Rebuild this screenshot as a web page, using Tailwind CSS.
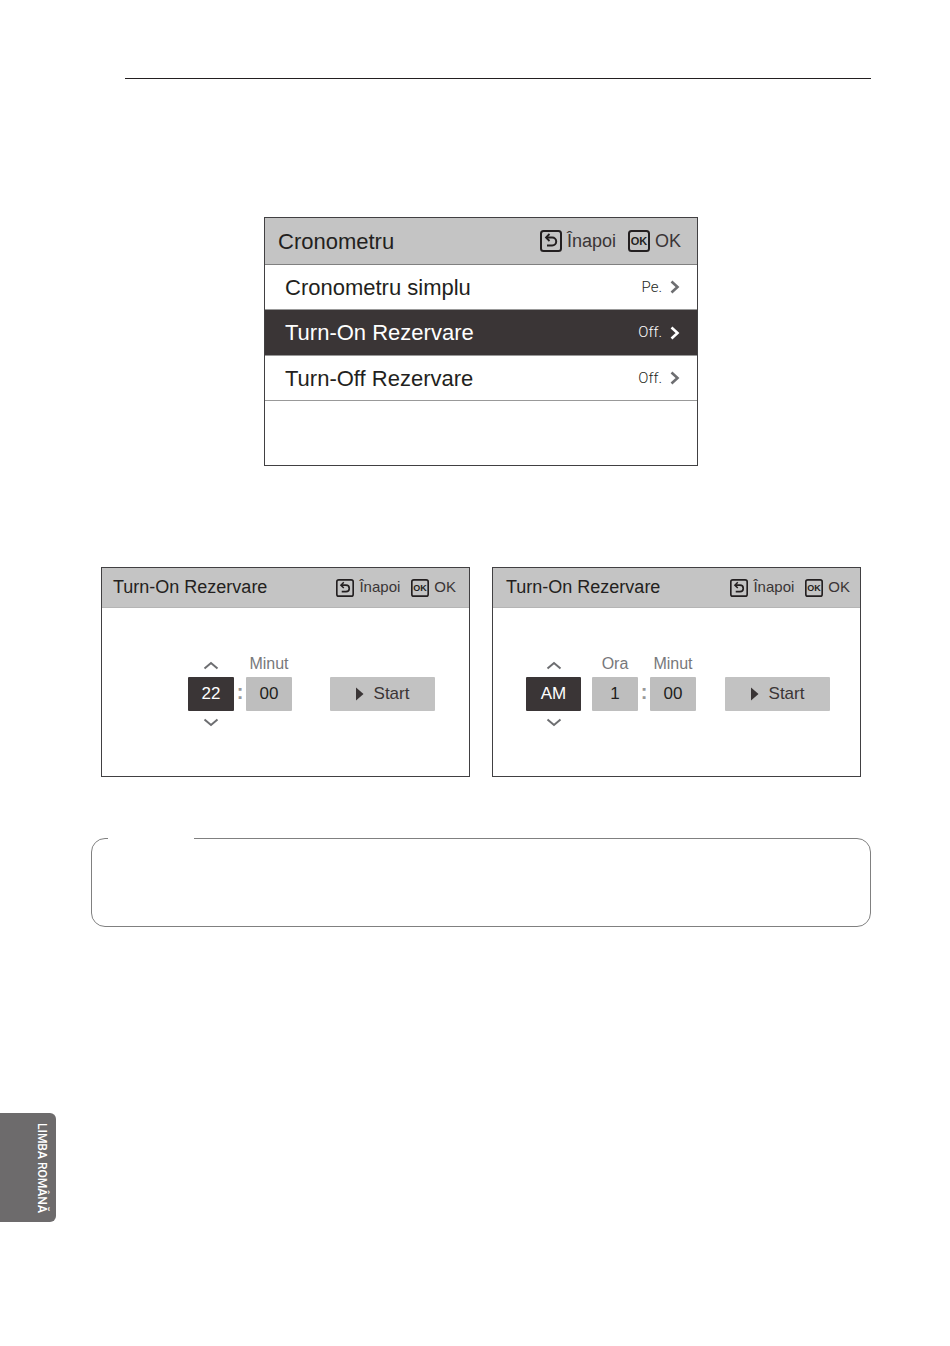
<!DOCTYPE html>
<html lang="ro">

<head>
	<meta charset="UTF-8">
	<meta name="viewport" content="width=device-width, initial-scale=1">
	<title>Cronometru</title>
	<script src="https://cdn.jsdelivr.net/npm/@tailwindcss/browser@4"></script>
</head>

<body class="bg-white font-['Liberation_Sans',Arial,sans-serif] text-[#231f20]">
	<!-- Shared icons -->
	<svg class="hidden">
		<symbol id="back" viewBox="0 0 22 22">
			<rect x="1" y="1" width="20" height="20" rx="2.5" fill="none" stroke="currentColor" stroke-width="2" />
			<path d="M6 7.5h6.200a4 4 0 0 1 0 8H7" fill="none" stroke="currentColor" stroke-width="2" />
			<path d="M9.500 4 6 7.500l3.500 3.500" fill="none" stroke="currentColor" stroke-width="1.800" />
		</symbol>
		<symbol id="ok" viewBox="0 0 22 22">
			<rect x="1" y="1" width="20" height="20" rx="2.5" fill="none" stroke="currentColor" stroke-width="2" />
			<text x="11" y="15" text-anchor="middle" font-size="11" font-weight="700" fill="currentColor">OK</text>
		</symbol>
		<symbol id="right" viewBox="0 0 10 14">
			<path d="M1.5 1.5 7.5 7l-6 5.5" fill="none" stroke="currentColor" stroke-width="2.6" />
		</symbol>
		<symbol id="up" viewBox="0 0 16 9">
			<path d="M1.5 7.5 8 2l6.5 5.5" fill="none" stroke="currentColor" stroke-width="2" />
		</symbol>
		<symbol id="down" viewBox="0 0 16 9">
			<path d="M1.5 1.5 8 7l6.5-5.5" fill="none" stroke="currentColor" stroke-width="2" />
		</symbol>
		<symbol id="play" viewBox="0 0 8 14">
			<path d="M0 .5 7.5 7 0 13.5z" fill="currentColor" />
		</symbol>
	</svg>

	<hr class="mt-[78px] ml-[125px] mr-[79px] border-t border-[#231f20]">

	<main class="pl-[91px] pr-[79px]">
		<!-- Timer menu -->
		<section class="mt-[138px] mx-auto w-[434px] h-[249px] border border-[#414042]">
			<header class="flex items-center h-[47px] pl-[13px] pr-4 bg-[#c4c4c4] border-b border-[#808080]">
				<h1 class="text-[22px]">Cronometru</h1>
				<button class="flex items-center gap-[5px] ml-auto text-[18px] text-[#3a3536]"><svg class="size-[22px] text-[#231f20]"><use href="#back" /></svg>Înapoi</button>
				<button class="flex items-center gap-[5px] ml-3 text-[18px] text-[#3a3536]"><svg aria-hidden="true" class="size-[22px] text-[#231f20]"><use href="#ok" /></svg>OK</button>
			</header>
			<a href="#" class="flex items-center h-[45px] pl-5 pr-[17px] border-b border-[#999999] text-[22px]">Cronometru simplu<span class="ml-auto mr-2 font-[Roboto] font-light text-[15px]">Pe.</span><svg class="w-[10px] h-[14px] text-[#6d6e71]"><use href="#right" /></svg></a>
			<a href="#" class="flex items-center h-[46px] pl-5 pr-[17px] border-b border-[#999999] bg-[#3a3536] text-white text-[22px]">Turn-On Rezervare<span class="ml-auto mr-2 font-[Roboto] font-light text-[15px]">Off.</span><svg class="w-[10px] h-[14px]"><use href="#right" /></svg></a>
			<a href="#" class="flex items-center h-[45px] pl-5 pr-[17px] border-b border-[#999999] text-[22px]">Turn-Off Rezervare<span class="ml-auto mr-2 font-[Roboto] font-light text-[15px]">Off.</span><svg class="w-[10px] h-[14px] text-[#6d6e71]"><use href="#right" /></svg></a>
		</section>

		<div class="flex gap-[22px] mt-[101px] px-[10px]">
			<!-- 24 hour format -->
			<section class="flex-1 h-[210px] border border-[#414042]">
				<header class="flex items-center h-10 pl-[11px] pr-[13px] bg-[#c4c4c4] border-b border-[#b5b5b5]">
					<h2 class="text-[18px]">Turn-On Rezervare</h2>
					<button class="flex items-center gap-[5px] ml-auto text-[15px] text-[#3a3536]"><svg class="size-[18px] text-[#231f20]"><use href="#back" /></svg>Înapoi</button>
					<button class="flex items-center gap-[5px] ml-[11px] text-[15px] text-[#3a3536]"><svg aria-hidden="true" class="size-[18px] text-[#231f20]"><use href="#ok" /></svg>OK</button>
				</header>
				<div class="flex pt-[45px] pl-[86px] pr-[34px] text-[17px]">
					<div class="flex flex-col items-center w-[46px]">
						<button aria-label="Sus" class="flex items-end h-6 pb-[7px] text-[#6d6e71]"><svg class="w-4 h-[9px]"><use href="#up" /></svg></button>
						<input aria-label="Ora" class="w-full h-[34px] rounded-[1px] bg-[#3a3536] text-white text-center" type="text" value="22">
						<button aria-label="Jos" class="pt-[7px] text-[#6d6e71]"><svg class="w-4 h-[9px]"><use href="#down" /></svg></button>
					</div>
					<span class="w-3 h-[34px] mt-6 text-center text-[20px] leading-[30px] font-bold text-[#999999]">:</span>
					<div class="flex flex-col items-center w-[46px]">
						<label for="minutes24" class="h-6 text-[16px] leading-[22px] text-[#77787b]">Minut</label>
						<input id="minutes24" class="w-full h-[34px] rounded-[1px] bg-[#bebebe] text-center" type="text" value="00">
					</div>
					<button class="flex items-center justify-center gap-[10px] w-[105px] h-[34px] mt-6 ml-auto rounded-[1px] bg-[#c2c2c2] text-[#3a3536]"><svg class="w-2 h-[14px]"><use href="#play" /></svg>Start</button>
				</div>
			</section>

			<!-- AM / PM format -->
			<section class="flex-1 h-[210px] border border-[#414042]">
				<header class="flex items-center h-10 pl-[13px] pr-[10px] bg-[#c4c4c4] border-b border-[#b5b5b5]">
					<h2 class="text-[18px]">Turn-On Rezervare</h2>
					<button class="flex items-center gap-[5px] ml-auto text-[15px] text-[#3a3536]"><svg class="size-[18px] text-[#231f20]"><use href="#back" /></svg>Înapoi</button>
					<button class="flex items-center gap-[5px] ml-[11px] text-[15px] text-[#3a3536]"><svg aria-hidden="true" class="size-[18px] text-[#231f20]"><use href="#ok" /></svg>OK</button>
				</header>
				<div class="flex pt-[45px] pl-[33px] pr-[30px] text-[17px]">
					<div class="flex flex-col items-center w-[55px] mr-[11px]">
						<button aria-label="Sus" class="flex items-end h-6 pb-[7px] text-[#6d6e71]"><svg class="w-4 h-[9px]"><use href="#up" /></svg></button>
						<input aria-label="AM / PM" class="w-full h-[34px] rounded-[1px] bg-[#3a3536] text-white text-center" type="text" value="AM">
						<button aria-label="Jos" class="pt-[7px] text-[#6d6e71]"><svg class="w-4 h-[9px]"><use href="#down" /></svg></button>
					</div>
					<div class="flex flex-col items-center w-[46px]">
						<label for="hour12" class="h-6 text-[16px] leading-[22px] text-[#77787b]">Ora</label>
						<input id="hour12" class="w-full h-[34px] rounded-[1px] bg-[#bebebe] text-center" type="text" value="1">
					</div>
					<span class="w-3 h-[34px] mt-6 text-center text-[20px] leading-[30px] font-bold text-[#999999]">:</span>
					<div class="flex flex-col items-center w-[46px]">
						<label for="minutes12" class="h-6 text-[16px] leading-[22px] text-[#77787b]">Minut</label>
						<input id="minutes12" class="w-full h-[34px] rounded-[1px] bg-[#bebebe] text-center" type="text" value="00">
					</div>
					<button class="flex items-center justify-center gap-[10px] w-[105px] h-[34px] mt-6 ml-auto rounded-[1px] bg-[#c2c2c2] text-[#3a3536]"><svg class="w-2 h-[14px]"><use href="#play" /></svg>Start</button>
				</div>
			</section>
		</div>

		<!-- Note box, the legend leaves the gap in the top border -->
		<fieldset class="h-[93px] mt-[57px] px-4 border border-[#808080] rounded-[14px]">
			<legend class="w-[86px] h-2"></legend>
		</fieldset>
	</main>

	<aside class="flex items-center justify-end w-14 h-[109px] mt-[186px] pr-[6px] rounded-r-md bg-[#6d6b6c] text-white">
		<span class="[writing-mode:vertical-rl] whitespace-nowrap font-[Roboto] font-medium text-[12px] leading-4">LIMBA ROMÂNĂ</span>
	</aside>
</body>

</html>
